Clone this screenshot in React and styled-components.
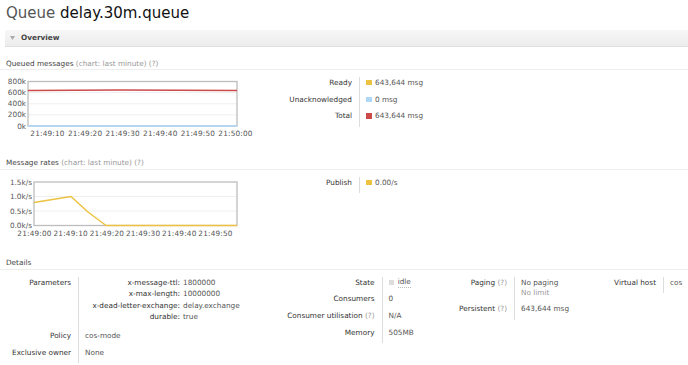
import React from "react";
import styled, { createGlobalStyle } from "styled-components";

const GlobalStyle = createGlobalStyle`
  * { box-sizing: border-box; }
  body {
    margin: 0;
    background: #fff;
    font-family: "DejaVu Sans", Verdana, sans-serif;
    font-size: 7.3px;
    line-height: 11.4px;
    color: #444;
  }
`;

const Page = styled.div`
  width: 688px;
  height: 365px;
  overflow: hidden;
`;

const Title = styled.h1`
  margin: 0 0 8.3px;
  padding: 4px 6px 0;
  font-size: 15px;
  line-height: 18px;
  font-weight: normal;
  color: #555;
  white-space: nowrap;

  b {
    font-weight: normal;
    color: #111;
  }
`;

const SectionBar = styled.div`
  margin-left: 5px;
  height: 16.7px;
  display: flex;
  align-items: center;
  gap: 6px;
  padding-left: 5px;
  background: linear-gradient(#f7f7f7, #ececec);
  border-bottom: 1px solid #e0e0e0;
  border-top-left-radius: 2px;
  font-weight: bold;
  color: #444;
`;

const Heading = styled.h3`
  margin: ${(p) => (p.$first ? "10.6px" : "16px")} 0 0;
  padding-left: 6px;
  font-size: 7.3px;
  line-height: 11.4px;
  font-weight: normal;
  color: #444;
  border-bottom: 1px solid #eee;

  span {
    color: #999;
  }
`;

const ChartRow = styled.div`
  display: flex;
  align-items: flex-start;
  height: 65.5px;
  margin-top: 6px;
`;

const ChartSvg = styled.svg`
  flex: none;
  display: block;

  text {
    font-family: "DejaVu Sans", Verdana, sans-serif;
    font-size: 7.3px;
    fill: #555;
  }
`;

const Facts = styled.table`
  flex: none;
  border-collapse: separate;
  border-spacing: 0;
  table-layout: fixed;
  width: ${(p) => p.$th + p.$td}px;
  margin-top: ${(p) => p.$offset || 0}px;

  > tbody > tr > th {
    width: ${(p) => p.$th}px;
    text-align: right;
    font-weight: normal;
    color: #333;
    vertical-align: top;
    padding: 0 7px 5.2px 0;
    border-right: 1px solid #ddd;
    white-space: nowrap;
  }

  > tbody > tr > td {
    width: ${(p) => p.$td}px;
    vertical-align: top;
    padding: 0 0 5.2px 6px;
    color: #555;
    white-space: nowrap;
  }
`;

const Hint = styled.span`
  color: #999;
`;

const Value = styled.div`
  display: flex;
  align-items: center;
  gap: ${(p) => p.$gap || 3.5}px;
`;

const Swatch = styled.span`
  display: inline-block;
  flex: none;
  width: 5.5px;
  height: 5.5px;
  background: ${(p) => p.$color};
`;

const Idle = styled.span`
  border-bottom: 1px dotted #bbb;
  line-height: 10px;
`;

const SubNote = styled.div`
  color: #999;
  line-height: 10px;
`;

const Params = styled.table`
  border-collapse: collapse;
  margin-bottom: 2px;

  td {
    padding: 0;
    line-height: 11.5px;
    white-space: nowrap;
  }
`;

const ParamKey = styled.td`
  width: 95px;
  text-align: right;
  color: #333;
`;

const ParamValue = styled.td`
  padding-left: 3px !important;
  color: #555;
`;

const DetailsRow = styled.div`
  display: flex;
  align-items: flex-start;
  margin-top: 7px;
  padding-left: 6px;
`;

const YELLOW = "#edc240";
const BLUE = "#afd8f8";
const RED = "#cb4b4b";

function Chart({ box, yTicks, xTicks, xLabelY, grid, series }) {
  return (
    <ChartSvg width={280} height={66}>
      {grid.map((y) => (
        <line key={y} x1={box.x0} x2={box.x1} y1={y} y2={y} stroke="#efefef" strokeWidth="1" />
      ))}
      <rect
        x={box.x0}
        y={box.y0}
        width={box.x1 - box.x0}
        height={box.y1 - box.y0}
        fill="none"
        stroke="#bdbdbd"
        strokeWidth="1.3"
      />
      {series.map((s) => (
        <polyline
          key={s.color}
          points={s.points.map((p) => p.join(",")).join(" ")}
          fill="none"
          stroke={s.color}
          strokeWidth="1.5"
          strokeLinejoin="round"
        />
      ))}
      {yTicks.map((t) => (
        <text key={t.label} x={box.x0 - 2} y={t.y} textAnchor="end" dominantBaseline="central">
          {t.label}
        </text>
      ))}
      {xTicks.map((t) => (
        <text
          key={t.label}
          x={t.x}
          y={xLabelY}
          textAnchor="middle"
          dominantBaseline="central"
          letterSpacing="0.2"
        >
          {t.label}
        </text>
      ))}
    </ChartSvg>
  );
}

const queuedTimes = ["21:49:10", "21:49:20", "21:49:30", "21:49:40", "21:49:50", "21:50:00"];
const rateTimes = ["21:49:00", "21:49:10", "21:49:20", "21:49:30", "21:49:40", "21:49:50"];

const queuedChart = {
  box: { x0: 28, x1: 237, y0: 5.5, y1: 50 },
  yTicks: [
    { label: "800k", y: 5.5 },
    { label: "600k", y: 16.6 },
    { label: "400k", y: 27.75 },
    { label: "200k", y: 38.9 },
    { label: "0k", y: 50 },
  ],
  grid: [16.6, 27.75, 38.9],
  xTicks: queuedTimes.map((label, i) => ({ label, x: 47.5 + 37.6 * i })),
  xLabelY: 57.5,
  series: [
    { color: BLUE, points: [[28, 50], [237, 50]] },
    { color: RED, points: [[28, 14.5], [120, 14.1], [237, 14.6]] },
  ],
};

const ratesChart = {
  box: { x0: 34, x1: 237, y0: 6, y1: 49.5 },
  yTicks: [
    { label: "1.5k/s", y: 6 },
    { label: "1.0k/s", y: 20.5 },
    { label: "0.5k/s", y: 35 },
    { label: "0.0k/s", y: 49.5 },
  ],
  grid: [20.5, 35],
  xTicks: rateTimes.map((label, i) => ({ label, x: 34.5 + 36.2 * i })),
  xLabelY: 57,
  series: [
    {
      color: YELLOW,
      points: [[34, 26.5], [71, 20.5], [88, 36], [106, 49.5], [237, 49.5]],
    },
  ],
};

function Legend({ rows }) {
  return (
    <Facts $th={80} $td={120} $offset={1}>
      <tbody>
        {rows.map((r) => (
          <tr key={r.label}>
            <th>{r.label}</th>
            <td>
              <Value>
                <Swatch $color={r.color} />
                {r.value}
              </Value>
            </td>
          </tr>
        ))}
      </tbody>
    </Facts>
  );
}

export default function App() {
  return (
    <Page>
      <GlobalStyle />
      <Title>
        Queue <b>delay.30m.queue</b>
      </Title>

      <SectionBar>
        <svg width="5" height="4" viewBox="0 0 5 4">
          <path d="M0 0H5L2.5 4Z" fill="#aaa" />
        </svg>
        Overview
      </SectionBar>

      <Heading $first>
        Queued messages <span>(chart: last minute) (?)</span>
      </Heading>
      <ChartRow>
        <Chart {...queuedChart} />
        <Legend
          rows={[
            { label: "Ready", color: YELLOW, value: "643,644 msg" },
            { label: "Unacknowledged", color: BLUE, value: "0 msg" },
            { label: "Total", color: RED, value: "643,644 msg" },
          ]}
        />
      </ChartRow>

      <Heading>
        Message rates <span>(chart: last minute) (?)</span>
      </Heading>
      <ChartRow>
        <Chart {...ratesChart} />
        <Legend rows={[{ label: "Publish", color: YELLOW, value: "0.00/s" }]} />
      </ChartRow>

      <Heading>Details</Heading>
      <DetailsRow>
        <Facts $th={73} $td={201}>
          <tbody>
            <tr>
              <th>Parameters</th>
              <td>
                <Params>
                  <tbody>
                    <tr>
                      <ParamKey>x-message-ttl:</ParamKey>
                      <ParamValue>1800000</ParamValue>
                    </tr>
                    <tr>
                      <ParamKey>x-max-length:</ParamKey>
                      <ParamValue>10000000</ParamValue>
                    </tr>
                    <tr>
                      <ParamKey>x-dead-letter-exchange:</ParamKey>
                      <ParamValue>delay.exchange</ParamValue>
                    </tr>
                    <tr>
                      <ParamKey>durable:</ParamKey>
                      <ParamValue>true</ParamValue>
                    </tr>
                  </tbody>
                </Params>
              </td>
            </tr>
            <tr>
              <th>Policy</th>
              <td>cos-mode</td>
            </tr>
            <tr>
              <th>Exclusive owner</th>
              <td>None</td>
            </tr>
          </tbody>
        </Facts>

        <Facts $th={102.5} $td={67.5}>
          <tbody>
            <tr>
              <th>State</th>
              <td>
                <Value $gap={3.7}>
                  <Swatch $color="#ddd" />
                  <Idle>idle</Idle>
                </Value>
              </td>
            </tr>
            <tr>
              <th>Consumers</th>
              <td>0</td>
            </tr>
            <tr>
              <th>
                Consumer utilisation <Hint>(?)</Hint>
              </th>
              <td>N/A</td>
            </tr>
            <tr>
              <th>Memory</th>
              <td>505MB</td>
            </tr>
          </tbody>
        </Facts>

        <Facts $th={65} $td={95}>
          <tbody>
            <tr>
              <th>
                Paging <Hint>(?)</Hint>
              </th>
              <td>
                No paging
                <SubNote>No limit</SubNote>
              </td>
            </tr>
            <tr>
              <th>
                Persistent <Hint>(?)</Hint>
              </th>
              <td>643,644 msg</td>
            </tr>
          </tbody>
        </Facts>

        <Facts $th={54} $td={30}>
          <tbody>
            <tr>
              <th>Virtual host</th>
              <td>cos</td>
            </tr>
          </tbody>
        </Facts>
      </DetailsRow>
    </Page>
  );
}
